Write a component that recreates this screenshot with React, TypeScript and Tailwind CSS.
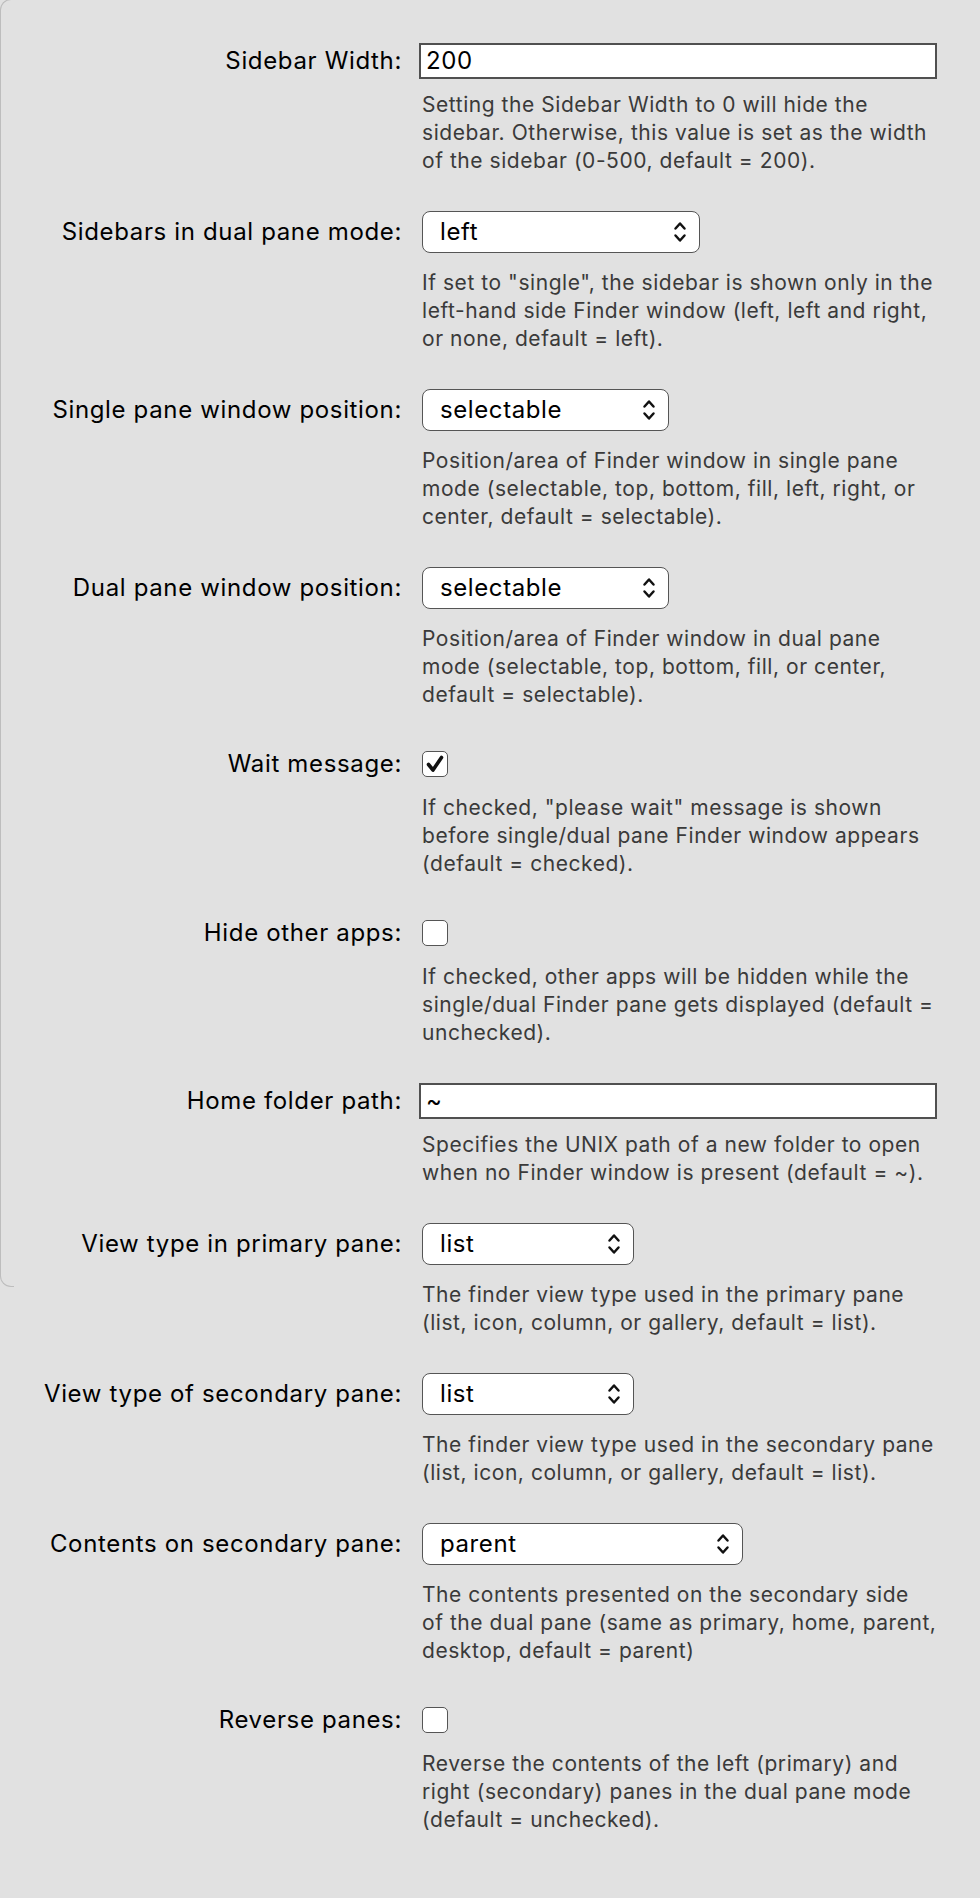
import React from "react";

type Row =
  | { label: string; kind: "input"; value: string; help: string[] }
  | { label: string; kind: "select"; value: string; width: string; help: string[] }
  | { label: string; kind: "check"; checked: boolean; help: string[] };

const rows: Row[] = [
  {
    label: "Sidebar Width:",
    kind: "input",
    value: "200",
    help: [
      "Setting the Sidebar Width to 0 will hide the",
      "sidebar. Otherwise, this value is set as the width",
      "of the sidebar (0-500, default = 200).",
    ],
  },
  {
    label: "Sidebars in dual pane mode:",
    kind: "select",
    value: "left",
    width: "w-[278px]",
    help: [
      'If set to "single", the sidebar is shown only in the',
      "left-hand side Finder window (left, left and right,",
      "or none, default = left).",
    ],
  },
  {
    label: "Single pane window position:",
    kind: "select",
    value: "selectable",
    width: "w-[247px]",
    help: [
      "Position/area of Finder window in single pane",
      "mode (selectable, top, bottom, fill, left, right, or",
      "center, default = selectable).",
    ],
  },
  {
    label: "Dual pane window position:",
    kind: "select",
    value: "selectable",
    width: "w-[247px]",
    help: [
      "Position/area of Finder window in dual pane",
      "mode (selectable, top, bottom, fill, or center,",
      "default = selectable).",
    ],
  },
  {
    label: "Wait message:",
    kind: "check",
    checked: true,
    help: [
      'If checked, "please wait" message is shown',
      "before single/dual pane Finder window appears",
      "(default = checked).",
    ],
  },
  {
    label: "Hide other apps:",
    kind: "check",
    checked: false,
    help: [
      "If checked, other apps will be hidden while the",
      "single/dual Finder pane gets displayed (default =",
      "unchecked).",
    ],
  },
  {
    label: "Home folder path:",
    kind: "input",
    value: "~",
    help: [
      "Specifies the UNIX path of a new folder to open",
      "when no Finder window is present (default = ~).",
    ],
  },
  {
    label: "View type in primary pane:",
    kind: "select",
    value: "list",
    width: "w-[212px]",
    help: [
      "The finder view type used in the primary pane",
      "(list, icon, column, or gallery, default = list).",
    ],
  },
  {
    label: "View type of secondary pane:",
    kind: "select",
    value: "list",
    width: "w-[212px]",
    help: [
      "The finder view type used in the secondary pane",
      "(list, icon, column, or gallery, default = list).",
    ],
  },
  {
    label: "Contents on secondary pane:",
    kind: "select",
    value: "parent",
    width: "w-[321px]",
    help: [
      "The contents presented on the secondary side",
      "of the dual pane (same as primary, home, parent,",
      "desktop, default = parent)",
    ],
  },
  {
    label: "Reverse panes:",
    kind: "check",
    checked: false,
    help: [
      "Reverse the contents of the left (primary) and",
      "right (secondary) panes in the dual pane mode",
      "(default = unchecked).",
    ],
  },
];

function Chevrons() {
  return (
    <svg width="14" height="24" viewBox="0 0 14 24" fill="none" className="shrink-0">
      <path d="M2.5 8.5 L7 3.5 L11.5 8.5" stroke="#111" strokeWidth="2.5" strokeLinecap="round" strokeLinejoin="round" />
      <path d="M2.5 15.5 L7 20.5 L11.5 15.5" stroke="#111" strokeWidth="2.5" strokeLinecap="round" strokeLinejoin="round" />
    </svg>
  );
}

function Control({ row }: { row: Row }) {
  if (row.kind === "input") {
    return (
      <div className="-ml-[3px] flex h-[36px] w-[518px] items-center border-2 border-[#505050] bg-white pl-[5px] text-[24px] tracking-[0.6px] text-black">
        {row.value}
      </div>
    );
  }
  if (row.kind === "select") {
    return (
      <div
        className={`flex h-[42px] ${row.width} items-center justify-between rounded-[8px] border-[1.5px] border-[#555555] bg-white pl-[17px] pr-[12px] text-[24px] tracking-[0.6px] text-black`}
      >
        <span>{row.value}</span>
        <Chevrons />
      </div>
    );
  }
  return (
    <div className="flex h-[38px] items-center">
      <div className="flex h-[26px] w-[26px] items-center justify-center rounded-[5px] border-[1.5px] border-[#555555] bg-white">
        {row.checked && (
          <svg width="22" height="22" viewBox="0 0 22 22" fill="none">
            <path d="M4.5 11.5 L9 17 L17.5 4.5" stroke="#111" strokeWidth="3.6" strokeLinecap="round" strokeLinejoin="round" />
          </svg>
        )}
      </div>
    </div>
  );
}

export default function App() {
  return (
    <div
      className="relative min-h-[1898px] w-[980px] overflow-hidden bg-[#e1e1e1] pt-[43px]"
      style={{ fontFamily: "Inter, 'Liberation Sans', sans-serif" }}
    >
      <div className="pointer-events-none absolute left-0 top-[-1px] h-[1288px] w-[14px] rounded-l-[11px] border-b border-l border-t border-[#bdbdbd]" />
      <div className="flex flex-col gap-[36px]">
        {rows.map((row) => {
          const helpMt =
            row.kind === "select" ? "mt-[16px]" : row.kind === "check" ? "mt-[11px]" : "mt-[12px]";
          const labelH = row.kind === "select" ? "h-[42px]" : row.kind === "check" ? "h-[38px]" : "h-[36px]";
          return (
            <div key={row.label} className="grid grid-cols-[402px_1fr] gap-x-[20px]">
              <div className={`flex ${labelH} items-center justify-end whitespace-nowrap text-[24px] tracking-[0.65px] text-black`}>
                {row.label}
              </div>
              <div className="flex flex-col items-start">
                <Control row={row} />
                <div className={`${helpMt} text-[21px] leading-[28px] tracking-[0.55px] text-[#3a3a3a]`}>
                  {row.help.map((line, i) => (
                    <div key={i} className="whitespace-nowrap">
                      {line}
                    </div>
                  ))}
                </div>
              </div>
            </div>
          );
        })}
      </div>
    </div>
  );
}
